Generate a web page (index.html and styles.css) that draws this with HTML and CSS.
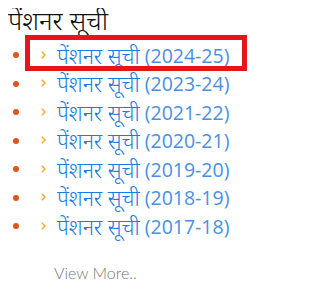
FILE: index.html
```html
<!DOCTYPE html>
<html lang="hi">
<head>
<meta charset="utf-8">
<link rel="stylesheet" href="styles.css">
</head>
<body>
<div class="widget">
  <h2 class="title">पेंशनर सूची</h2>
  <ul class="list">
    <li class="item highlight"><a class="link" href="#"><svg class="chev" viewBox="0 0 5 8" width="5" height="8"><polyline points="0.8,0.8 4,4 0.8,7.2"/></svg><span class="name">पेंशनर सूची</span><span class="year">(2024-25)</span></a></li>
    <li class="item"><a class="link" href="#"><svg class="chev" viewBox="0 0 5 8" width="5" height="8"><polyline points="0.8,0.8 4,4 0.8,7.2"/></svg><span class="name">पेंशनर सूची</span><span class="year">(2023-24)</span></a></li>
    <li class="item"><a class="link" href="#"><svg class="chev" viewBox="0 0 5 8" width="5" height="8"><polyline points="0.8,0.8 4,4 0.8,7.2"/></svg><span class="name">पेंशनर सूची</span><span class="year">(2021-22)</span></a></li>
    <li class="item"><a class="link" href="#"><svg class="chev" viewBox="0 0 5 8" width="5" height="8"><polyline points="0.8,0.8 4,4 0.8,7.2"/></svg><span class="name">पेंशनर सूची</span><span class="year">(2020-21)</span></a></li>
    <li class="item"><a class="link" href="#"><svg class="chev" viewBox="0 0 5 8" width="5" height="8"><polyline points="0.8,0.8 4,4 0.8,7.2"/></svg><span class="name">पेंशनर सूची</span><span class="year">(2019-20)</span></a></li>
    <li class="item"><a class="link" href="#"><svg class="chev" viewBox="0 0 5 8" width="5" height="8"><polyline points="0.8,0.8 4,4 0.8,7.2"/></svg><span class="name">पेंशनर सूची</span><span class="year">(2018-19)</span></a></li>
    <li class="item"><a class="link" href="#"><svg class="chev" viewBox="0 0 5 8" width="5" height="8"><polyline points="0.8,0.8 4,4 0.8,7.2"/></svg><span class="name">पेंशनर सूची</span><span class="year">(2017-18)</span></a></li>
  </ul>
  <a class="more" href="#">View More..</a>
</div>
</body>
</html>
```

FILE: styles.css
```css
body {
  margin: 8px;
  font-family: "Noto Sans", "Open Sans", "Noto Sans Devanagari", "Lohit Devanagari", "FreeSans", sans-serif;
  background: #fff;
}
.title {
  margin: -5px 0 0 0;
  font-weight: 300;
  font-size: 26px;
  line-height: 34px;
  color: #111;
}
.list {
  margin: 4px 0 0 0;
  padding: 0;
  list-style: none;
}
.item {
  display: flex;
  align-items: center;
  height: 28.5px;
  position: relative;
}
.item::before {
  content: "";
  width: 6px;
  height: 6px;
  border-radius: 50%;
  background: #e0531c;
  margin-left: 5px;
  flex: none;
}
.highlight::after {
  content: "";
  position: absolute;
  left: 17px;
  top: -6px;
  width: 222px;
  height: 36px;
  box-sizing: border-box;
  border: 5px solid #e8141c;
}
.link {
  display: flex;
  align-items: center;
  text-decoration: none;
  margin-left: 22px;
}
.chev {
  flex: none;
  fill: none;
  stroke: #f7a623;
  stroke-width: 1.4;
  margin-right: 11px;
  margin-top: -1px;
}
.name {
  color: #1a7be0;
  font-size: 21.5px;
  font-weight: 300;
  margin-right: 5px;
}
.year {
  color: #4a90e2;
  font-family: "Open Sans", sans-serif;
  font-size: 19.5px;
}
.more {
  display: block;
  margin: 22px 0 0 46px;
  color: #777;
  font-family: "Lato", sans-serif;
  font-weight: 300;
  font-size: 16px;
  text-decoration: none;
}
```
